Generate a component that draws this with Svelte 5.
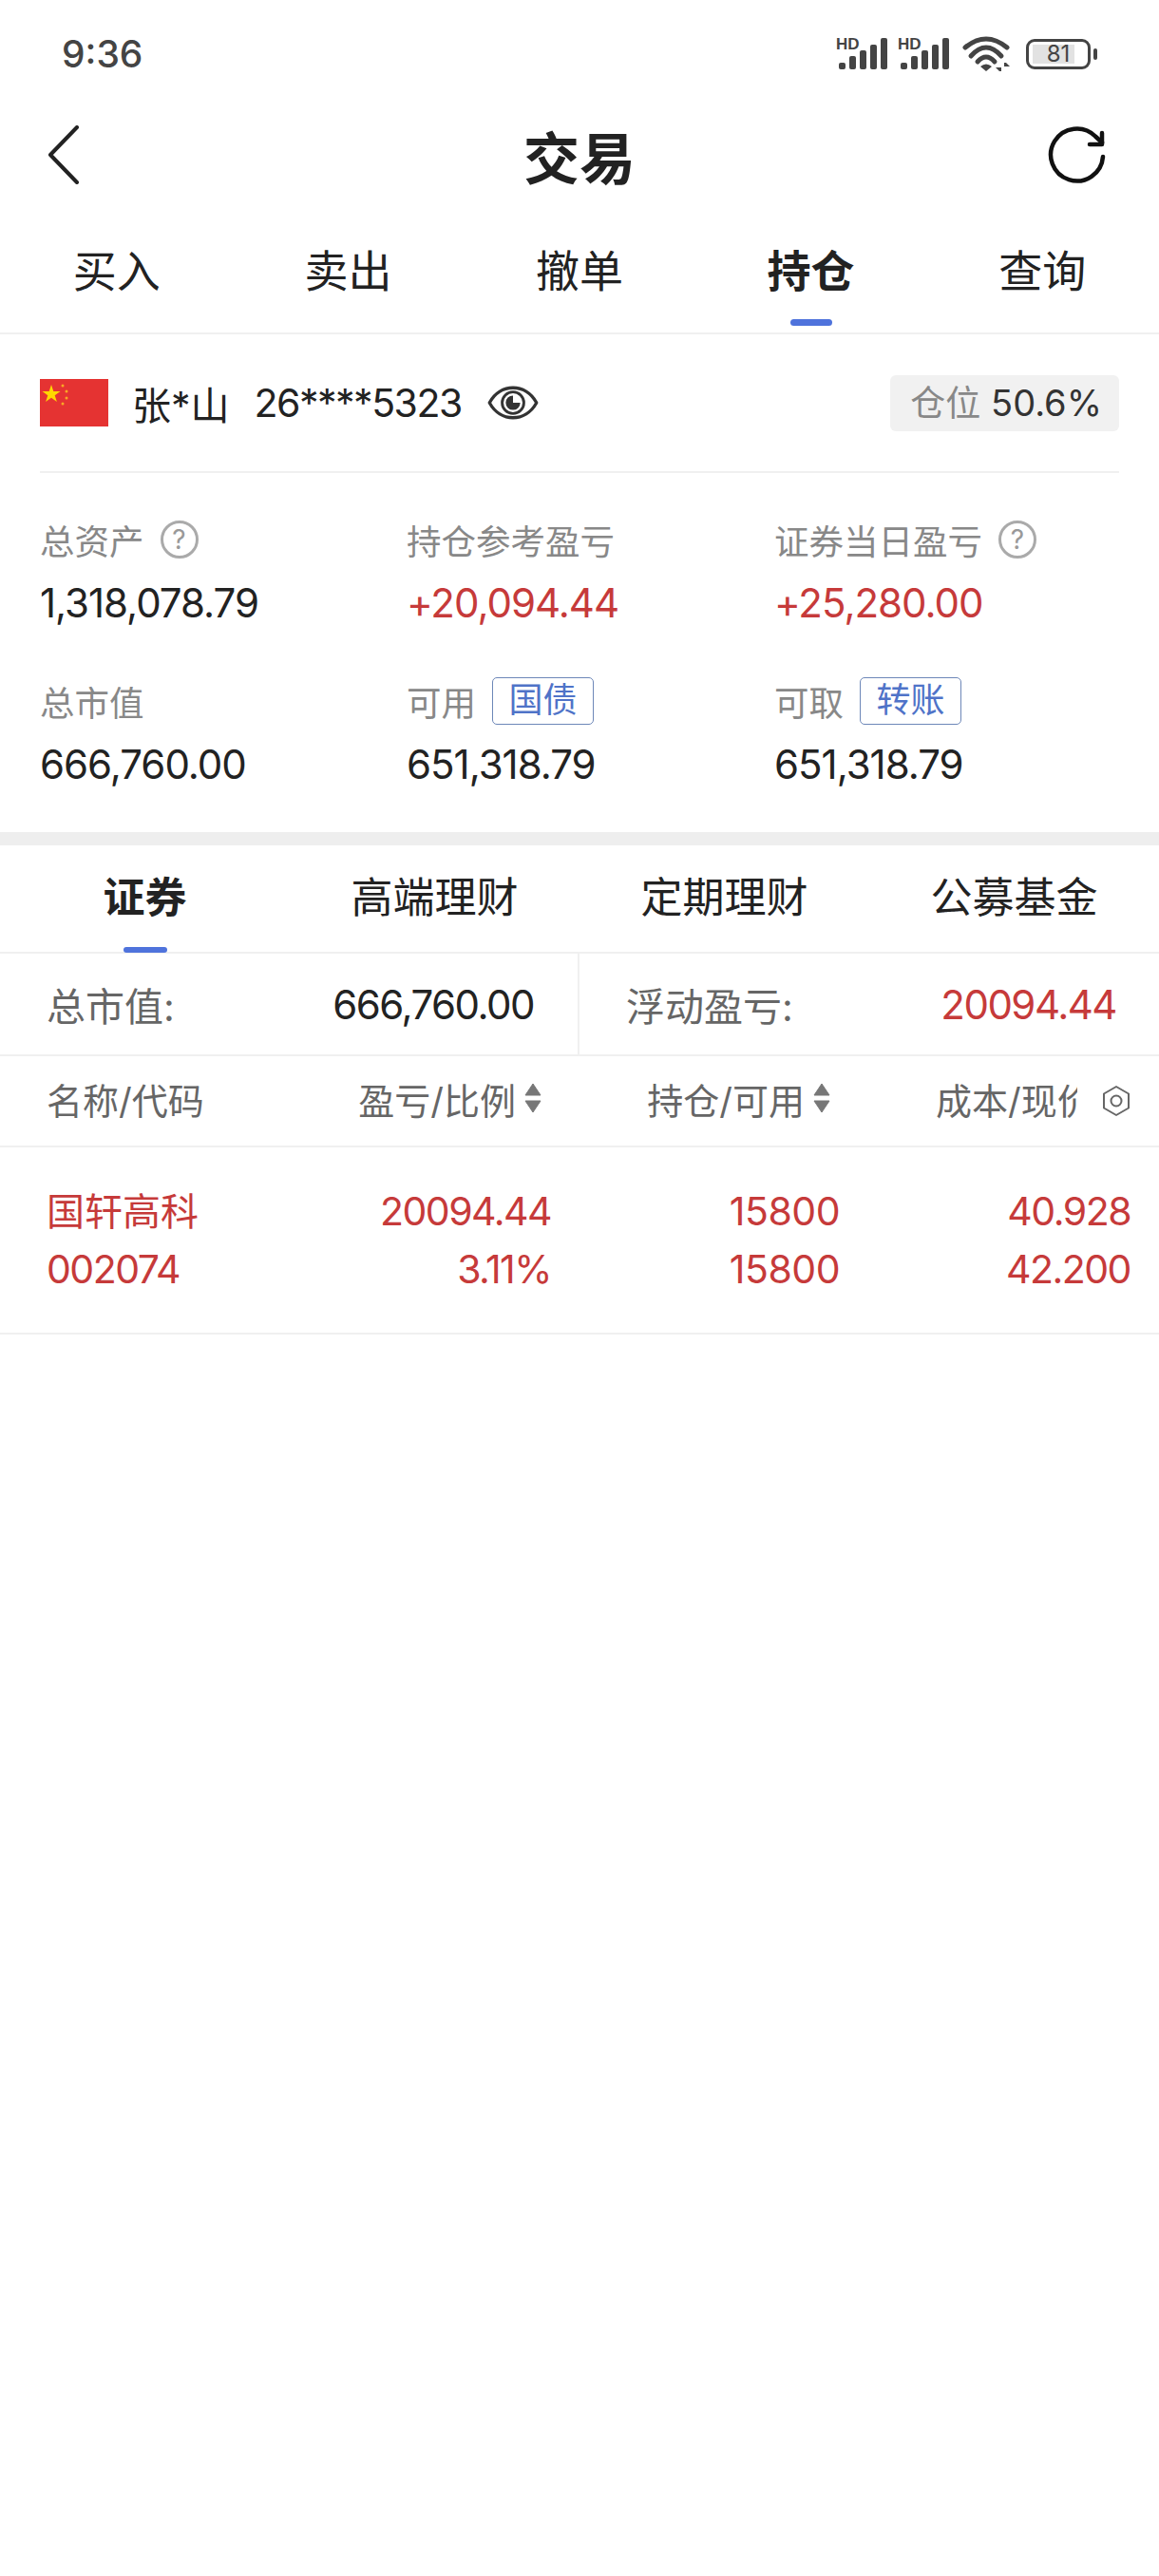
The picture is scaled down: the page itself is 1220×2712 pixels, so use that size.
<script>
	const tabs = ['买入', '卖出', '撤单', '持仓', '查询']
	const subTabs = ['证券', '高端理财', '定期理财', '公募基金']
	const activeTab = 3
	const activeSub = 0

	const bars = [
		[3, 26, 7],
		[14, 19, 14],
		[25, 13, 20],
		[36, 7, 26],
		[47, 0, 33]
	]
</script>

{#snippet signal()}
	<svg class="signal" width="54" height="34" viewBox="0 0 54 34">
		<text x="0" y="12" class="hd">HD</text>
		{#each bars as b}
			<rect x={b[0]} y={b[1]} width="7" height={b[2]} rx="2" fill="#444" />
		{/each}
	</svg>
{/snippet}

{#snippet sortIcon()}
	<svg class="sort" width="20" height="32" viewBox="0 0 20 32">
		<path d="M10 1 18 13H2Z" fill="#777" stroke="#777" stroke-linejoin="round" />
		<path d="M10 31 18 19H2Z" fill="#777" stroke="#777" stroke-linejoin="round" />
	</svg>
{/snippet}

{#snippet help()}
	<span class="help">?</span>
{/snippet}

<div class="page">
	<header class="status">
		<span class="time">9:36</span>
		<div class="status-icons">
			{@render signal()}
			{@render signal()}
			<svg class="wifi" width="52" height="38" viewBox="0 0 52 38" fill="none" stroke="#444" stroke-width="5" stroke-linecap="round">
				<path d="M3 12Q25 -6 47 12" />
				<path d="M9 21Q25 3 41 21" />
				<path d="M16 27Q25 17 34 27" />
				<path d="M25 37 19 32Q25 27 31 32Z" fill="#444" stroke="none" />
				<path d="M41 28V37H39L35 33H41ZM44 37V28H46L50 32H44Z" fill="#444" stroke="none" />
			</svg>
			<div class="battery">
				<div class="cell">
					<span class="level"></span>
					<span class="pct">81</span>
				</div>
				<span class="nub"></span>
			</div>
		</div>
	</header>

	<nav class="title-bar">
		<svg class="back" width="33" height="62" viewBox="0 0 33 62" fill="none" stroke="#222" stroke-width="4" stroke-linecap="round" stroke-linejoin="round">
			<path d="M31 2 3 31 31 60" />
		</svg>
		<h1>交易</h1>
		<svg class="refresh" width="62" height="62" viewBox="0 0 62 62" fill="none" stroke="#111" stroke-width="4.500" stroke-linecap="round" stroke-linejoin="round">
			<path d="M58 33A27.500 27.500 0 1 1 50 11.500L57 18" />
			<path d="M44 20H57V8" />
		</svg>
	</nav>

	<div class="tabs">
		{#each tabs as t, i}
			<div class="tab" class:active={i === activeTab}>{t}</div>
		{/each}
	</div>

	<section class="account">
		<div class="account-head">
			<svg class="flag" width="72" height="50" viewBox="0 0 72 50">
				<rect width="72" height="50" fill="#e53332" />
				<path d="M12 6l2.300 6.900h7.200l-5.800 4.300 2.200 6.900-5.900-4.300-5.900 4.300 2.200-6.900-5.800-4.300h7.200z" fill="#ffd700" />
				<circle cx="24" cy="7" r="1.500" fill="#f9a825" />
				<circle cx="28" cy="13" r="1.500" fill="#f9a825" />
				<circle cx="28" cy="20" r="1.500" fill="#f9a825" />
				<circle cx="24" cy="26" r="1.500" fill="#f9a825" />
			</svg>
			<span class="name">张*山</span>
			<span class="acct-no">26****5323</span>
			<svg class="eye" width="56" height="40" viewBox="0 0 56 42" fill="none" stroke="#333" stroke-width="3.500">
				<path d="M2 21C14 -1 42 -1 54 21C42 43 14 43 2 21Z" stroke-linejoin="round" />
				<circle cx="28" cy="21" r="12" stroke-width="3" />
				<path d="M28 21V13A8 8 0 1 0 36 21Z" fill="#333" stroke="none" />
			</svg>
			<div class="position"><span class="pos-label">仓位</span> 50.6%</div>
		</div>

		<div class="stats">
			<div class="stat">
				<div class="label">总资产 {@render help()}</div>
				<div class="value">1,318,078.79</div>
			</div>
			<div class="stat">
				<div class="label">持仓参考盈亏</div>
				<div class="value red">+20,094.44</div>
			</div>
			<div class="stat">
				<div class="label">证券当日盈亏 {@render help()}</div>
				<div class="value red">+25,280.00</div>
			</div>
			<div class="stat">
				<div class="label">总市值</div>
				<div class="value">666,760.00</div>
			</div>
			<div class="stat">
				<div class="label">可用 <span class="chip">国债</span></div>
				<div class="value">651,318.79</div>
			</div>
			<div class="stat">
				<div class="label">可取 <span class="chip">转账</span></div>
				<div class="value">651,318.79</div>
			</div>
		</div>
	</section>

	<div class="band"></div>

	<div class="sub-tabs">
		{#each subTabs as t, i}
			<div class="sub-tab" class:active={i === activeSub}>{t}</div>
		{/each}
	</div>

	<div class="summary">
		<div class="sum-cell left">
			<span class="sum-label">总市值:</span>
			<span class="sum-value">666,760.00</span>
		</div>
		<div class="sum-cell right">
			<span class="sum-label">浮动盈亏:</span>
			<span class="sum-value red">20094.44</span>
		</div>
	</div>

	<div class="table-head grid">
		<div>名称/代码</div>
		<div class="head-r">盈亏/比例 {@render sortIcon()}</div>
		<div class="head-r">持仓/可用 {@render sortIcon()}</div>
		<div class="head-last">
			<span class="clip">成本/现价</span>
			<svg class="hex" width="30" height="34" viewBox="0 0 30 34" fill="none" stroke="#666" stroke-width="2">
				<path d="M15 2 28 9.500V24.500L15 32 2 24.500V9.500Z" stroke-linejoin="round" />
				<circle cx="15" cy="17" r="5.500" />
			</svg>
		</div>
	</div>

	<div class="row grid">
		<div class="cell-l">
			<div class="stock-name">国轩高科</div>
			<div>002074</div>
		</div>
		<div class="cell-r">
			<div>20094.44</div>
			<div>3.11%</div>
		</div>
		<div class="cell-r wide">
			<div>15800</div>
			<div>15800</div>
		</div>
		<div class="cell-r">
			<div>40.928</div>
			<div>42.200</div>
		</div>
	</div>
</div>

<style>
	:global(body) {
		margin: 0;
		background: #fff;
	}
	.page {
		width: 1220px;
		min-height: 2712px;
		background: #fff;
		color: #222;
		font-family: Inter, "Noto Sans CJK SC", sans-serif;
		overflow: hidden;
	}
	.red {
		color: #c63a3a;
	}

	.status {
		height: 100px;
		display: flex;
		align-items: center;
		justify-content: space-between;
		padding: 13px 65px 0 65px;
		box-sizing: border-box;
	}
	.time {
		font-size: 39px;
		font-weight: 500;
		color: #444;
	}
	.status-icons {
		display: flex;
		align-items: center;
	}
	.signal {
		margin-right: 11px;
		overflow: visible;
	}
	.wifi {
		margin: 0 15px 0 3px;
	}
	.hd {
		font: 700 17px "Liberation Sans", sans-serif;
		fill: #444;
	}
	.battery {
		display: flex;
		align-items: center;
		gap: 3px;
	}
	.cell {
		width: 68px;
		height: 32px;
		box-sizing: border-box;
		border: 3px solid #444;
		border-radius: 9px;
		position: relative;
		display: flex;
		align-items: center;
		justify-content: center;
	}
	.level {
		position: absolute;
		left: 4px;
		top: 3px;
		bottom: 3px;
		width: 44px;
		background: #e2e2e2;
	}
	.pct {
		position: relative;
		font-size: 24px;
		color: #444;
		line-height: 1;
	}
	.nub {
		width: 4px;
		height: 12px;
		background: #444;
		border-radius: 2px;
	}

	.title-bar {
		height: 126px;
		display: grid;
		grid-template-columns: 1fr auto 1fr;
		align-items: center;
		padding: 0 55px;
		box-sizing: border-box;
	}
	.back {
		margin-left: -5px;
	}
	.refresh {
		justify-self: end;
	}
	h1 {
		margin: 0;
		font-size: 59px;
		font-weight: 700;
		color: #222;
	}

	.tabs {
		display: grid;
		grid-template-columns: repeat(5, 1fr);
		height: 126px;
		padding: 0 1px;
		border-bottom: 2px solid #f0f0f0;
		box-sizing: border-box;
	}
	.tab {
		position: relative;
		text-align: center;
		font-size: 46px;
		line-height: 70px;
		padding-top: 24px;
		color: #222;
	}
	.tab.active {
		font-weight: 700;
	}
	.tab.active::after {
		content: "";
		position: absolute;
		left: 50%;
		bottom: 7px;
		width: 44px;
		height: 7px;
		margin-left: -22px;
		background: #4f73dc;
		border-radius: 4px;
	}

	.account {
		padding: 0 42px;
	}
	.account-head {
		display: flex;
		align-items: center;
		height: 146px;
		border-bottom: 2px solid #f0f0f0;
		box-sizing: border-box;
		font-size: 41px;
	}
	.flag {
		margin-right: 25px;
	}
	.name {
		margin-right: 26px;
	}
	.acct-no {
		margin-right: 26px;
		letter-spacing: -1.500px;
	}
	.position {
		margin-left: auto;
		background: #f1f1f1;
		padding: 0 18px 0 21px;
		font-size: 38px;
		line-height: 58px;
		border-radius: 6px;
		color: #333;
	}
	.pos-label {
		color: #888;
		font-size: 37px;
	}

	.stats {
		display: grid;
		grid-template-columns: 386px 387px 1fr;
		row-gap: 46px;
		padding-top: 42px;
	}
	.label {
		display: flex;
		align-items: center;
		gap: 17px;
		height: 56px;
		font-size: 36.500px;
		color: #888;
	}
	.value {
		font-size: 42px;
		line-height: 58px;
		margin-top: 10px;
		letter-spacing: -1px;
		color: #222;
	}
	.value.red {
		color: #c63a3a;
	}
	.help {
		width: 40px;
		height: 40px;
		box-sizing: border-box;
		border: 3px solid #aaa;
		border-radius: 50%;
		font-size: 28px;
		line-height: 34px;
		text-align: center;
		color: #999;
	}
	.chip {
		border: 1.500px solid #6d87b8;
		border-radius: 5px;
		color: #4f73c8;
		height: 50px;
		width: 107px;
		box-sizing: border-box;
		text-align: center;
		line-height: 46px;
		font-size: 36px;
	}

	.band {
		height: 14px;
		background: #eeeeee;
		margin-top: 42px;
	}

	.sub-tabs {
		display: grid;
		grid-template-columns: repeat(4, 1fr);
		height: 114px;
		border-bottom: 2px solid #f0f0f0;
		box-sizing: border-box;
	}
	.sub-tab {
		position: relative;
		text-align: center;
		font-size: 44px;
		line-height: 70px;
		padding-top: 20px;
		color: #222;
	}
	.sub-tab.active {
		font-weight: 700;
	}
	.sub-tab.active::after {
		content: "";
		position: absolute;
		left: 50%;
		bottom: -1px;
		width: 46px;
		height: 6px;
		margin-left: -23px;
		background: #4f73dc;
		border-radius: 3px;
	}

	.summary {
		display: grid;
		grid-template-columns: 610px 610px;
		height: 108px;
		border-bottom: 2px solid #f0f0f0;
		box-sizing: border-box;
		font-size: 41px;
	}
	.sum-cell {
		display: flex;
		align-items: center;
		justify-content: space-between;
	}
	.sum-cell.left {
		padding: 0 46px 0 49px;
		border-right: 2px solid #f0f0f0;
	}
	.sum-cell.right {
		padding: 0 45px 0 49px;
	}
	.sum-label {
		color: #666;
	}
	.sum-value {
		font-size: 42px;
		letter-spacing: -1.500px;
	}

	.grid {
		display: grid;
		grid-template-columns: 190px 341px 304px 306px;
		padding-left: 49px;
	}
	.table-head {
		height: 96px;
		padding-bottom: 6px;
		align-items: center;
		border-bottom: 2px solid #f0f0f0;
		box-sizing: border-box;
		font-size: 38px;
		color: #666;
	}
	.head-r {
		display: flex;
		align-items: center;
		justify-content: flex-end;
		gap: 8px;
		margin-right: 9px;
	}
	.sort {
		flex: none;
	}
	.head-last {
		display: flex;
		align-items: center;
		justify-content: flex-end;
	}
	.clip {
		width: 149px;
		overflow: hidden;
		white-space: nowrap;
		margin-right: 26px;
	}
	.hex {
		flex: none;
		margin-top: 6px;
	}

	.row {
		height: 197px;
		align-items: center;
		border-bottom: 2px solid #f0f0f0;
		box-sizing: border-box;
		font-size: 41px;
		letter-spacing: -1.500px;
		color: #c63a3a;
		line-height: 61px;
	}
	.stock-name {
		font-size: 40px;
		letter-spacing: 0;
	}
	.cell-r {
		text-align: right;
	}
	.cell-r.wide {
		letter-spacing: -0.500px;
	}
</style>
